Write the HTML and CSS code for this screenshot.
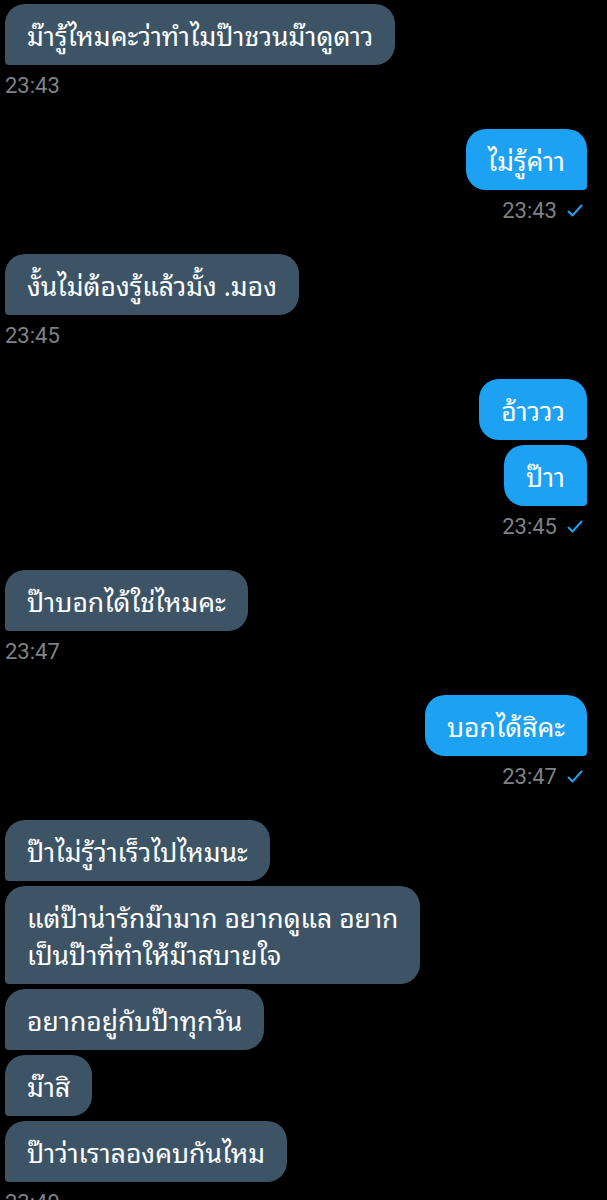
FILE: index.html
```html
<!DOCTYPE html>
<html lang="th">
  <head>
    <meta charset="UTF-8">
    <meta name="viewport" content="width=device-width, initial-scale=1.0">
    <title>Chat</title>
    <link rel="stylesheet" href="styles.css">
  </head>
  <body>
    <div class="chat">

      <div class="group in">
        <div class="bubble">ม๊ารู้ไหมคะว่าทำไมป๊าชวนม๊าดูดาว</div>
        <div class="meta">23:43</div>
      </div>

      <div class="group out">
        <div class="bubble">ไม่รู้ค่าา</div>
        <div class="meta">23:43 <svg class="tick" viewBox="0 0 16 14"><polyline points="1.5,7.5 5.5,11.5 14.5,1.5"/></svg></div>
      </div>

      <div class="group in">
        <div class="bubble">งั้นไม่ต้องรู้แล้วมั้ง .มอง</div>
        <div class="meta">23:45</div>
      </div>

      <div class="group out">
        <div class="bubble">อ้าววว</div>
        <div class="bubble">ป๊าา</div>
        <div class="meta">23:45 <svg class="tick" viewBox="0 0 16 14"><polyline points="1.5,7.5 5.5,11.5 14.5,1.5"/></svg></div>
      </div>

      <div class="group in">
        <div class="bubble">ป๊าบอกได้ใช่ไหมคะ</div>
        <div class="meta">23:47</div>
      </div>

      <div class="group out">
        <div class="bubble">บอกได้สิคะ</div>
        <div class="meta">23:47 <svg class="tick" viewBox="0 0 16 14"><polyline points="1.5,7.5 5.5,11.5 14.5,1.5"/></svg></div>
      </div>

      <div class="group in">
        <div class="bubble">ป๊าไม่รู้ว่าเร็วไปไหมนะ</div>
        <div class="bubble">แต่ป๊าน่ารักม๊ามาก อยากดูแล อยาก<br>เป็นป๊าที่ทำให้ม๊าสบายใจ</div>
        <div class="bubble">อยากอยู่กับป๊าทุกวัน</div>
        <div class="bubble">ม๊าสิ</div>
        <div class="bubble">ป๊าว่าเราลองคบกันไหม</div>
        <div class="meta">23:49</div>
      </div>

    </div>
  </body>
</html>
```

FILE: styles.css
```css
body {
    margin: 0;
    padding: 0;
    background: #000;
    font-family: "Noto Sans Thai Looped", "Loma", "Garuda", "Noto Sans Thai", Roboto, "Noto Sans", sans-serif;
}
.chat {
    display: flex;
    flex-direction: column;
    gap: 30px;
    padding: 4px 20px 0 5px;
}
.group {
    display: flex;
    flex-direction: column;
    gap: 5px;
}
.group.in {
    align-items: flex-start;
}
.group.out {
    align-items: flex-end;
}
.bubble {
    font-size: 26.5px;
    line-height: 37px;
    padding: 12px 22px;
    color: #fff;
    border-radius: 20px;
}
.in .bubble {
    background: #3d5466;
    border-bottom-left-radius: 4px;
}
.out .bubble {
    background: #1da1f2;
    border-bottom-right-radius: 4px;
}
.meta {
    font-family: Roboto, "Liberation Sans", sans-serif;
    font-size: 22px;
    line-height: 26px;
    color: #7d8287;
    display: flex;
    align-items: center;
    gap: 10px;
    margin-top: 3px;
}
.out .meta {
    padding-right: 4px;
}
.tick {
    width: 16px;
    height: 14px;
    fill: none;
    stroke: #1da1f2;
    stroke-width: 2;
    stroke-linecap: round;
    stroke-linejoin: round;
}
```
